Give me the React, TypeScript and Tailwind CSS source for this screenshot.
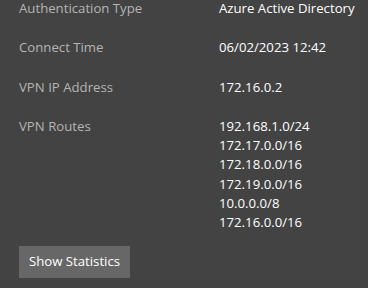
const ROWS = [
  { label: "Authentication Type", values: ["Azure Active Directory"] },
  { label: "Connect Time", values: ["06/02/2023 12:42"] },
  { label: "VPN IP Address", values: ["172.16.0.2"] },
  {
    label: "VPN Routes",
    values: [
      "192.168.1.0/24",
      "172.17.0.0/16",
      "172.18.0.0/16",
      "172.19.0.0/16",
      "10.0.0.0/8",
      "172.16.0.0/16",
    ],
  },
];

export default function App() {
  return (
    <div
      className="h-[288px] w-[368px] overflow-hidden bg-[#434343] pl-[19px] text-[13.2px] leading-[19.3px]"
      style={{ fontFamily: '"Open Sans", "Noto Sans", sans-serif' }}
    >
      <div className="-mt-px flex flex-col gap-[20px]">
        {ROWS.map((r) => (
          <div key={r.label} className="flex">
            <div className="w-[200px] shrink-0 text-[#b4b4b4]">{r.label}</div>
            <div className="flex flex-col text-white">
              {r.values.map((v) => (
                <span key={v}>{v}</span>
              ))}
            </div>
          </div>
        ))}
      </div>
      <button
        type="button"
        className="mt-[13px] h-[32px] w-[111px] bg-[#676767] text-white"
      >
        Show Statistics
      </button>
    </div>
  );
}
